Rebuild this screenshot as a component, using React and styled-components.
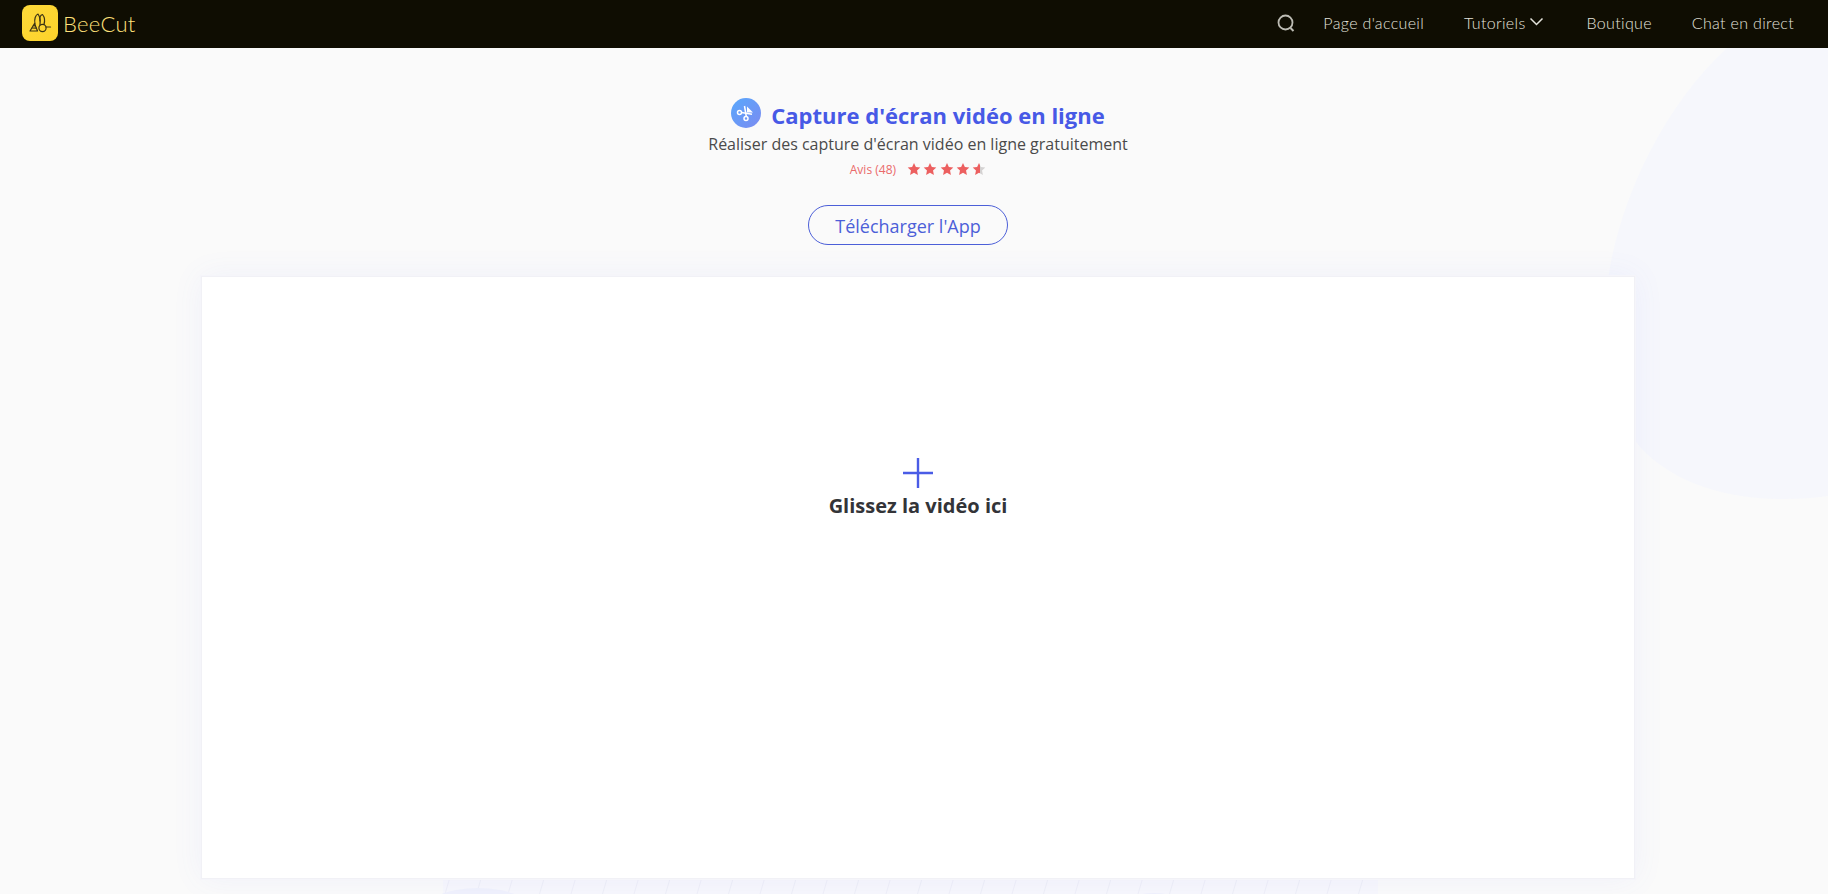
import React from "react";
import styled, { createGlobalStyle } from "styled-components";

const Global = createGlobalStyle`
  html, body { margin: 0; padding: 0; height: 894px; overflow: hidden; background: #fafafa; }
  * { box-sizing: border-box; }
`;

const Page = styled.div`
  position: relative;
  width: 1828px;
  height: 894px;
  overflow: hidden;
  background: #fafafa;
  font-family: "Open Sans", sans-serif;
`;

const Backdrop = styled.svg`
  position: absolute;
  inset: 0;
  width: 1828px;
  height: 894px;
`;

const Header = styled.header`
  position: relative;
  height: 48px;
  background: #0f0d02;
  display: flex;
  align-items: center;
  justify-content: space-between;
  padding: 0 34px 2px 22px;
`;

const Brand = styled.div`
  display: flex;
  align-items: center;
  gap: 5px;
`;

const LogoMark = styled.div`
  width: 36px;
  height: 36px;
  border-radius: 8px;
  background: linear-gradient(135deg, #fcd93a, #fdd22a);
  display: flex;
  align-items: center;
  justify-content: center;
`;

const BrandName = styled.span`
  font-family: "Lato", sans-serif;
  font-weight: 300;
  font-size: 22px;
  color: #ffe07a;
  letter-spacing: 0.3px;
`;

const Nav = styled.nav`
  display: flex;
  align-items: center;
  padding-bottom: 2px;
  font-family: "Lato", sans-serif;
  font-weight: 300;
  font-size: 16px;
  color: #e4e3dc;
`;

const SearchButton = styled.span`
  display: flex;
  margin: 2px 27px 0 0;
  color: #bdbcb4;
`;

const NavItem = styled.a`
  display: flex;
  align-items: center;
  gap: 3px;
  margin-right: ${(p) => p.$gap}px;
  letter-spacing: 0.33px;
  white-space: nowrap;
`;

const Main = styled.main`
  position: relative;
  display: flex;
  flex-direction: column;
  align-items: center;
  padding-left: 8px;
`;

const TitleRow = styled.div`
  margin-top: 50px;
  display: flex;
  align-items: flex-start;
  gap: 10px;
  height: 38px;
`;

const TitleIcon = styled.div`
  width: 30px;
  height: 30px;
  border-radius: 50%;
  background: linear-gradient(135deg, #58a8fc, #7b8bf1);
  display: flex;
  align-items: center;
  justify-content: center;
`;

const Title = styled.h1`
  margin: 0;
  padding-top: 2px;
  font-size: 22px;
  line-height: 30px;
  font-weight: 700;
  color: #4759e6;
  white-space: nowrap;
`;

const Subtitle = styled.p`
  margin: -3px 0 0;
  font-size: 16px;
  line-height: 22px;
  color: #4a4a4a;
`;

const Rating = styled.div`
  margin-top: 5px;
  display: flex;
  align-items: center;
  gap: 11px;
  height: 18px;
  font-size: 12px;
  color: #ea6a6a;
`;

const Stars = styled.div`
  display: flex;
  gap: 2.3px;
`;

const DownloadButton = styled.a`
  margin: 27px 20px 0 0;
  width: 200px;
  height: 40px;
  padding-top: 2px;
  border: 1px solid #4c5fd8;
  border-radius: 20px;
  display: flex;
  align-items: center;
  justify-content: center;
  font-size: 18px;
  color: #4c5fd8;
`;

const Card = styled.section`
  margin-top: 31px;
  width: 1434px;
  height: 603px;
  background: #fff;
  border: 1px solid #f1f1f6;
  box-shadow: 0 0 0 1px #f5f5fa, 0 0 30px rgba(100, 110, 240, 0.07);
  display: flex;
  flex-direction: column;
  align-items: center;
  padding-top: 180px;
`;

const PlusIcon = styled.svg`
  display: block;
`;

const DropText = styled.div`
  margin-top: 3px;
  font-size: 20px;
  line-height: 28px;
  font-weight: 700;
  color: #333438;
`;

const Star = ({ half }) => (
  <svg width="14" height="14" viewBox="0 0 24 24">
    <defs>
      <linearGradient id="halfStar">
        <stop offset="55%" stopColor="#ec5f5f" />
        <stop offset="55%" stopColor="#d4d2d2" />
      </linearGradient>
    </defs>
    <path
      d="M12 1.5l3.2 7 7.6.9-5.6 5.2 1.5 7.5L12 18.3l-6.7 3.8 1.5-7.5L1.2 9.4l7.6-.9z"
      fill={half ? "url(#halfStar)" : "#ec5f5f"}
    />
  </svg>
);

const hatch = Array.from({ length: 30 }, (_, i) => 445 + i * 31.5);

export default function App() {
  return (
    <Page>
      <Global />
      <Backdrop viewBox="0 0 1828 894">
        <path
          d="M1828 48H1727C1660 110 1622 200 1610 267C1598 335 1600 395 1640 447C1675 485 1730 499 1783 499C1800 499 1815 498 1828 496Z"
          fill="#f6f7fc"
        />
        <rect x="443" y="877" width="935" height="17" fill="#f7f7fc" />
        {hatch.map((x) => (
          <line key={x} x1={x} y1="894" x2={x + 5} y2="877" stroke="#eeeff7" strokeWidth="1" />
        ))}
        <ellipse cx="478" cy="915" rx="58" ry="27" fill="#f0f1fc" />
        <ellipse cx="1154" cy="920" rx="46" ry="27" fill="#f0f1fc" />
      </Backdrop>
      <Header>
        <Brand>
          <LogoMark>
            <svg width="28" height="28" viewBox="0 0 28 28" fill="none" stroke="#3a3214" strokeWidth="1.2" strokeLinejoin="round" strokeLinecap="round">
              <path d="M4 22 L8.5 14.5 L11.5 22 Z" />
              <path d="M6.2 19 L10.4 19.2 M7.4 16.6 L9.4 16.8" />
              <path d="M9 15 C8 10 9.5 6 12 5 C13.5 7 14.5 11 14 16" />
              <path d="M14 12 C13.5 8.5 14.5 6 16.5 5.5 C18.5 8 19 12 18 15.5" />
              <circle cx="16.5" cy="19" r="3.6" />
              <path d="M20 18 L24.5 18" />
            </svg>
          </LogoMark>
          <BrandName>BeeCut</BrandName>
        </Brand>
        <Nav>
          <SearchButton>
            <svg width="20" height="20" viewBox="0 0 20 20" fill="none" stroke="currentColor">
              <circle cx="9.5" cy="9.5" r="7" strokeWidth="1.8" />
              <path d="M14.5 15l3 3" strokeWidth="2" />
            </svg>
          </SearchButton>
          <NavItem $gap={40}>Page d'accueil</NavItem>
          <NavItem $gap={43}>
            Tutoriels
            <svg width="15" height="10" viewBox="0 0 15 10" fill="none" stroke="currentColor" strokeWidth="1.5">
              <path d="M1.5 1.5L7.5 7.5L13.5 1.5" />
            </svg>
          </NavItem>
          <NavItem $gap={40}>Boutique</NavItem>
          <NavItem $gap={0}>Chat en direct</NavItem>
        </Nav>
      </Header>
      <Main>
        <TitleRow>
          <TitleIcon>
            <svg width="22" height="22" viewBox="0 0 22 22" fill="none" stroke="#fff" strokeWidth="1.5">
              <circle cx="4.5" cy="10.5" r="2" />
              <circle cx="11" cy="16.5" r="2" />
              <path d="M6.5 10.6L17 12.2" />
              <path d="M11.3 14.5L9.5 4" />
              <path d="M12 4.5L18 10.5H12Z" fill="#fff" stroke="none" />
            </svg>
          </TitleIcon>
          <Title>Capture d'écran vidéo en ligne</Title>
        </TitleRow>
        <Subtitle>Réaliser des capture d'écran vidéo en ligne gratuitement</Subtitle>
        <Rating>
          <span>Avis (48)</span>
          <Stars>
            <Star />
            <Star />
            <Star />
            <Star />
            <Star half />
          </Stars>
        </Rating>
        <DownloadButton>Télécharger l'App</DownloadButton>
        <Card>
          <PlusIcon width="32" height="32" viewBox="0 0 32 32" stroke="#4a5ce6" strokeWidth="2.4">
            <path d="M1 16H31M16 1V31" />
          </PlusIcon>
          <DropText>Glissez la vidéo ici</DropText>
        </Card>
      </Main>
    </Page>
  );
}
